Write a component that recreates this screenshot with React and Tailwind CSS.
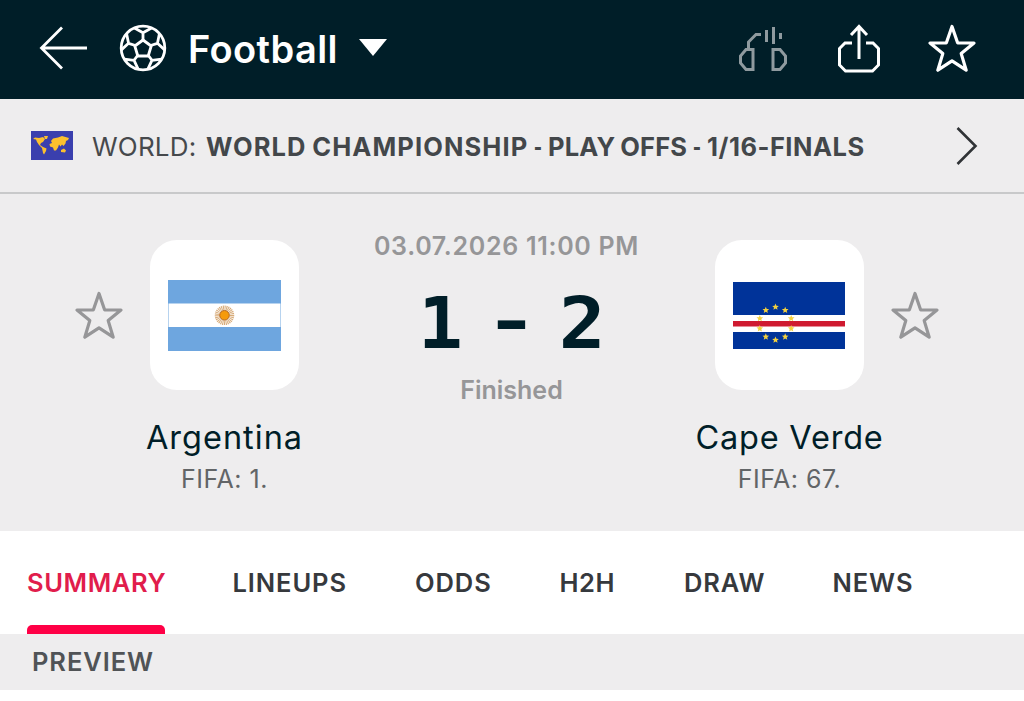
import React from "react";

const tabs = [
  { name: "SUMMARY", style: "w-[138px] tracking-[0.6px] text-[#e11d4c]", active: true },
  { name: "LINEUPS", style: "w-[115px] tracking-[0.9px] text-[#36393d]" },
  { name: "ODDS", style: "w-[77px] tracking-[0.9px] text-[#36393d]" },
  { name: "H2H", style: "w-[57px] tracking-[0.6px] text-[#36393d]" },
  { name: "DRAW", style: "w-[81px] tracking-[0.9px] text-[#36393d]" },
  { name: "NEWS", style: "w-[81px] tracking-[0.9px] text-[#36393d]" },
];

const StarIcon = ({ className }) => (
  <svg className={className} width="50" height="50" viewBox="0 0 50 50" fill="none" stroke="currentColor" strokeWidth="3.2" strokeLinejoin="round">
    <path d="M25 3.5 L30.6 19.8 L47 20 L34.2 30.6 L39.2 47.2 L25 37.8 L10.8 47.2 L15.8 30.6 L3 20 L19.4 19.8 Z" />
  </svg>
);

const BallIcon = () => (
  <svg width="48" height="48" viewBox="-24 -24 48 48" fill="none" stroke="#fff" strokeWidth="2.8" strokeLinejoin="round">
    <circle r="21.8" />
    <path d="M0 -8 L8.2 -2 L5.2 8 L-5.2 8 L-8.2 -2 Z" />
    {[0, 72, 144, 216, 288].map((a) => (
      <path key={a} transform={`rotate(${a})`} d="M0 -8 V-15.2 M-8.5 -20 L0 -15.2 L8.5 -20" />
    ))}
  </svg>
);

const starPoints = (cx, cy, r) => {
  let p = "";
  for (let i = 0; i < 10; i++) {
    const a = (Math.PI * i) / 5 - Math.PI / 2;
    const q = i % 2 ? r * 0.45 : r;
    p += `${cx + q * Math.cos(a)},${cy + q * Math.sin(a)} `;
  }
  return p;
};

const ArgentinaFlag = () => (
  <svg width="113" height="71" viewBox="0 0 113 71">
    <rect width="113" height="71" fill="#6ea6df" />
    <rect x="0.5" y="23.5" width="112" height="23.5" fill="#fff" />
    <circle cx="56.5" cy="35.3" r="7.5" fill="none" stroke="#c98f4c" strokeWidth="4.5" strokeDasharray="1 .6" opacity=".75" />
    <circle cx="56.5" cy="35.3" r="4.8" fill="#f59a0c" stroke="#b5651d" strokeWidth="1" />
  </svg>
);

const CapeVerdeFlag = () => (
  <svg width="112" height="67" viewBox="0 0 112 67">
    <rect width="112" height="67" fill="#003399" />
    <rect y="33" width="112" height="17" fill="#fff" />
    <rect y="39" width="112" height="5.5" fill="#cf1a30" />
    {[0, 36, 72, 108, 144, 180, 216, 252, 288, 324].map((a) => (
      <polygon
        key={a}
        fill="#f3d13e"
        points={starPoints(42.5 + 16.5 * Math.sin((a * Math.PI) / 180), 41.5 - 16.5 * Math.cos((a * Math.PI) / 180), 3.5)}
      />
    ))}
  </svg>
);

const WorldFlag = () => (
  <svg width="42" height="29" viewBox="0 0 42 29">
    <rect width="42" height="29" fill="#3a3fae" />
    <g fill="#fcc02e">
      <path d="M2 8 L4 6.5 L8 7 L12 6 L14 8 L12 11 L10 12 L9 14 L12 16 L15.5 17.5 L15 20 L13 23.5 L12 22 L11 17 L8 14 L6 11 L5 8.5 Z" />
      <path d="M13 5 L17 5 L16 8 L14 8 Z" />
      <path d="M20 10 L22 7.5 L27 6.5 L31 5 L38 7 L37 9 L35 10 L34.5 12.5 L32.5 15 L31 13.5 L29.5 15.5 L28 13.5 L27 16.5 L25 19.5 L23 19.5 L22 16.5 L19 15.5 L18.5 13 L21 12 Z" />
      <path d="M30 19 L33 17.5 L35 19.5 L34 21.5 L30 21 Z" />
    </g>
  </svg>
);

const Team = ({ name, rank, nameStyle, flag }) => (
  <div className="flex w-[220px] flex-col items-center">
    <div className="flex h-[150px] w-[149px] items-center justify-center rounded-[27px] bg-white">{flag}</div>
    <p className={`ml-px mt-[29px] whitespace-nowrap leading-[38px] text-[#001e28] ${nameStyle}`}>{name}</p>
    <p className="ml-px mt-[9px] whitespace-nowrap text-[25px] leading-[26px] tracking-[0.5px] text-[#626567]">{rank}</p>
  </div>
);

const App = () => {
  return (
    <div className="h-[701px] w-[1024px] overflow-hidden bg-white font-['Inter',sans-serif]">
      <header className="flex h-[99px] items-center bg-[#001e28] pb-[3px] text-white">
        <svg className="ml-[39px]" width="48" height="44" viewBox="0 0 48 44" fill="none" stroke="currentColor" strokeWidth="2.8">
          <path d="M48 22 H2.5 M23 1.5 L2.5 22 L23 42.5" />
        </svg>
        <div className="ml-8">
          <BallIcon />
        </div>
        <h1 className="ml-[21px] mt-px w-[150px] whitespace-nowrap text-[38px] font-semibold leading-none tracking-[0.4px]">Football</h1>
        <svg className="ml-5" width="30" height="18" viewBox="0 0 30 18">
          <path d="M1 0 H29 L15 17 Z" fill="currentColor" />
        </svg>
        <div className="ml-auto mr-[47px] flex items-center">
          <svg className="mr-[49px]" width="50" height="48" viewBox="0 0 50 48" fill="none" stroke="#8f9a9f" strokeWidth="3">
            <path d="M10.5 27 V18 L18 10.5 H23 M15 25.5 V45.5 H8 L2.5 39 V32 L8 25.5 Z M35 25.5 V45.5 H42 L47.5 39 V32 L42 25.5 Z M28.5 6 V18 M35.5 3 V20 M42.5 9 V15" />
          </svg>
          <svg className="mr-[46px]" width="44" height="50" viewBox="0 0 44 50" fill="none" stroke="currentColor" strokeWidth="3">
            <path d="M15 20 H8 L2.5 25.5 V42 L8.5 48 H35.5 L41.5 42 V25.5 L36 20 H29 M22 36 V3 M14 12 L22 3.5 L30 12" />
          </svg>
          <StarIcon />
        </div>
      </header>

      <div className="flex h-[95px] items-center border-b-2 border-[#c8c9ca] bg-[#eeedee] text-[26px] text-[#46494c]">
        <div className="ml-[31px]">
          <WorldFlag />
        </div>
        <span className="ml-[19px] mt-[2px] w-[114px] whitespace-nowrap tracking-[0.2px]">WORLD:</span>
        <div className="mt-[3px] flex whitespace-nowrap text-[25.5px] font-bold text-[#43474a]">
          <span className="w-[321px] tracking-[1.1px] [word-spacing:-1.5px]">WORLD CHAMPIONSHIP</span>
          <span className="flex w-[21px] justify-center">
            <span className="inline-block scale-x-[.7]">-</span>
          </span>
          <span className="w-[139px] tracking-[0.2px] [word-spacing:-1.5px]">PLAY OFFS</span>
          <span className="flex w-[20px] justify-center">
            <span className="inline-block scale-x-[.7]">-</span>
          </span>
          <span className="tracking-[0.5px]">1/16-FINALS</span>
        </div>
        <svg className="ml-auto mr-[46px]" width="22" height="38" viewBox="0 0 22 38" fill="none" stroke="#303336" strokeWidth="2.6">
          <path d="M1.5 1 L19.5 19 L1.5 37" />
        </svg>
      </div>

      <main className="flex h-[337px] bg-[#eeedee] pt-[46px]">
        <StarIcon className="ml-[74px] mt-[50px] shrink-0 text-[#969698]" />
        <div className="-ml-[10px]">
          <Team name="Argentina" rank="FIFA: 1." nameStyle="text-[32.5px] tracking-[1px]" flag={<ArgentinaFlag />} />
        </div>
        <div className="flex w-[345px] flex-col items-center">
          <p className="-mt-[10px] whitespace-nowrap text-[25px] font-semibold leading-8 tracking-[0.7px] text-[#969698]">03.07.2026 11:00 PM</p>
          <div className="ml-[10px] mt-[26px] flex w-[185px] justify-between font-['DejaVu_Sans_Mono',monospace] text-[71px] font-bold leading-[71px] text-[#001e28]">
            <span className="inline-block scale-x-105">1</span>
            <span className="inline-block -translate-y-[2px] scale-x-125 scale-y-[.85]">-</span>
            <span className="inline-block scale-x-110">2</span>
          </div>
          <p className="ml-[10px] mt-[15px] text-[25px] font-semibold leading-8 text-[#969698]">Finished</p>
        </div>
        <Team name="Cape Verde" rank="FIFA: 67." nameStyle="text-[32.5px] tracking-[0.8px]" flag={<CapeVerdeFlag />} />
        <StarIcon className="-ml-[9px] mt-[50px] shrink-0 text-[#969698]" />
      </main>

      <nav className="flex h-[103px] gap-[67.5px] bg-white pl-[27px] text-[25.5px] font-semibold">
        {tabs.map((tab) => (
          <div key={tab.name} className={`flex flex-col justify-between whitespace-nowrap pt-9 ${tab.style}`}>
            <span className="leading-8">{tab.name}</span>
            {tab.active && <div className="h-[9px] rounded-t-[5px] bg-[#ff0046]" />}
          </div>
        ))}
      </nav>

      <div className="flex h-14 items-center bg-[#eeedee] pl-8 text-[25.5px] font-semibold tracking-[0.9px] text-[#505356]">PREVIEW</div>
    </div>
  );
};

export default App;
